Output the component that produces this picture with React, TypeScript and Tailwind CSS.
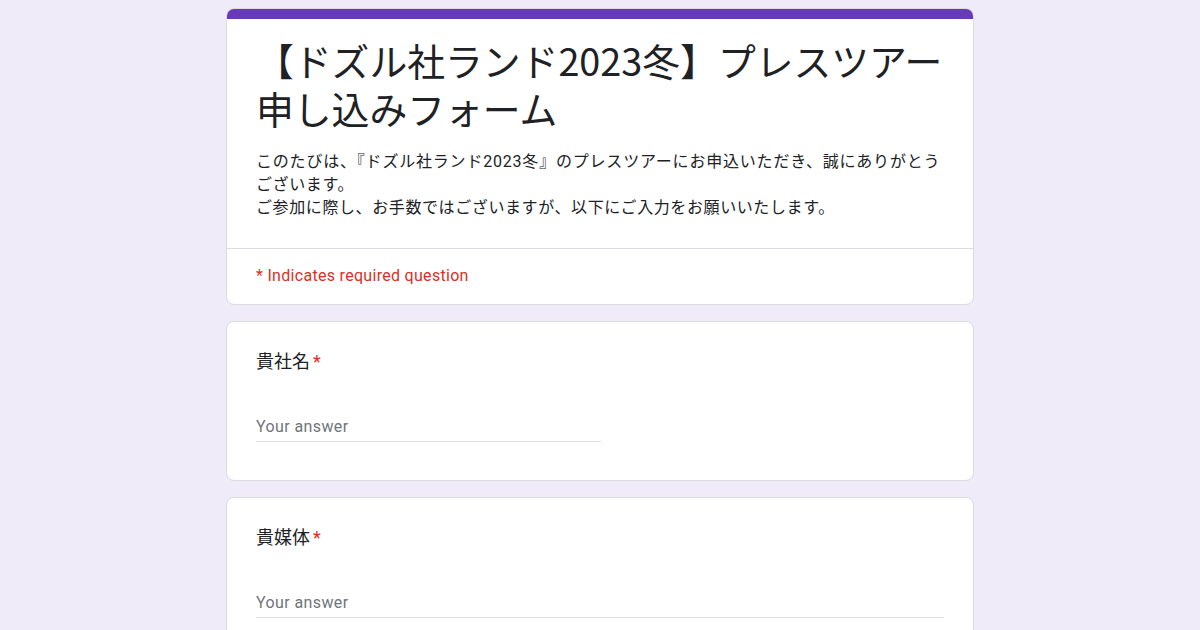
const QuestionCard = ({ label, short }: { label: string; short?: boolean }) => {
  return (
    <div className="rounded-lg border border-[#dadce0] bg-white px-[29px] pt-[28px] pb-[38px]">
      <div className="text-[18px] leading-[24px] text-[#202124]">
        {label}
        <span className="ml-[3px] text-[#d93025]">*</span>
      </div>
      <div className={`mt-[40px] border-b border-[#e0e0e0] ${short ? "w-[345px]" : "w-full"}`}>
        <div className="h-[27px] pt-[1px] text-[16px] leading-[24px] tracking-[0.4px] text-[#70757a]">
          Your answer
        </div>
      </div>
    </div>
  );
};

export default function App() {
  return (
    <div className="min-h-[630px] bg-[#f0ebf8] pt-[8px] font-['Roboto','Noto_Sans_CJK_JP',sans-serif]">
      <div className="mx-auto flex w-[748px] flex-col gap-[16px]">
        <div className="overflow-hidden rounded-lg border border-[#dadce0] bg-white">
          <div className="-mx-px -mt-px h-[11px] bg-[#673ab7]" />
          <div className="px-[29px] pt-[17px] pb-[29px]">
            <h1 className="whitespace-nowrap font-['Noto_Sans_CJK_JP',sans-serif] text-[37.8px] leading-[48px] text-[#202124]">
              【ドズル社ランド2023冬】プレスツアー
              <br />
              申し込みフォーム
            </h1>
            <p className="mt-[18px] whitespace-nowrap text-[16px] leading-[23px] tracking-[0.6px] text-[#202124]">
              <span className="tracking-[0.8px]">
                このたびは、『ドズル社ランド2023冬』のプレスツアーにお申込いただき、誠にありがとう
              </span>
              <br />
              ございます。
              <br />
              ご参加に際し、お手数ではございますが、以下にご入力をお願いいたします。
            </p>
          </div>
          <div className="border-t border-[#dadce0] px-[29px] pt-[15px] pb-[16px]">
            <div className="text-[16px] leading-[24px] tracking-[0.3px] text-[#d93025]">
              * Indicates required question
            </div>
          </div>
        </div>
        <QuestionCard label="貴社名" short />
        <QuestionCard label="貴媒体" />
      </div>
    </div>
  );
}
